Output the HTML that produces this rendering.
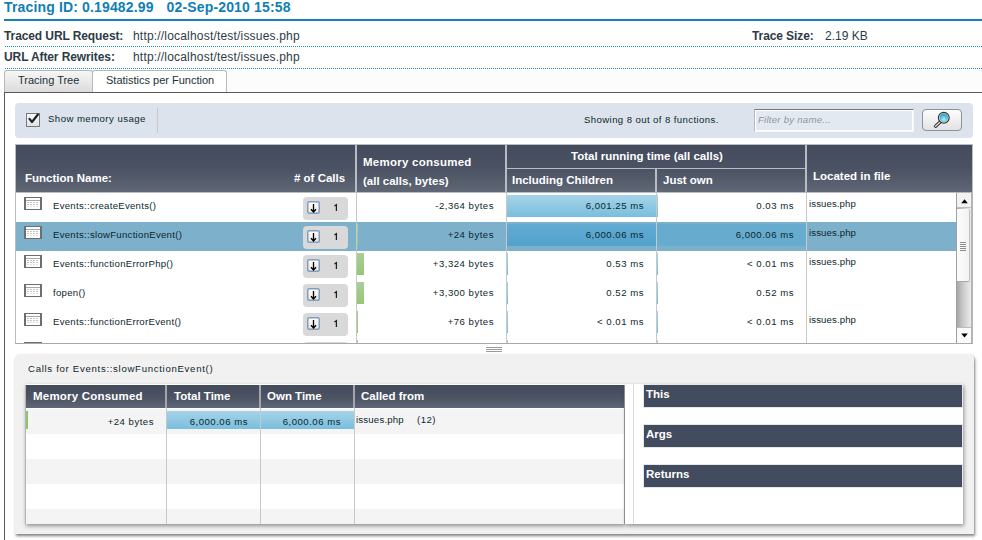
<!DOCTYPE html>
<html><head><meta charset="utf-8">
<style>
*{margin:0;padding:0;box-sizing:border-box}
html,body{width:982px;height:540px;overflow:hidden;background:#fff}
body{position:relative;font-family:"Liberation Sans",sans-serif;color:#1d3136}
.a{position:absolute;white-space:nowrap}
.b{font-weight:bold}
#title{left:4px;top:-1px;font-size:14px;line-height:16px;font-weight:bold;color:#117fb3;letter-spacing:0.15px}
#tline{left:4px;top:19px;width:978px;height:2px;background:#1483b7}
.lbl{font-size:12px;line-height:14px;font-weight:bold;color:#2e3b46;letter-spacing:-0.1px}
.val{font-size:12px;line-height:14px;color:#2e3b46;letter-spacing:0.19px}
.dot{left:5px;width:977px;height:1px;background-image:linear-gradient(to right,#1a8bbf 50%,transparent 50%);background-size:2px 1px}
/* tabs */
#tabbar{left:4px;top:70px;width:978px;height:23px;background:#fcfcfc;border-bottom:1px solid #5a5a5a}
.tab{top:70px;height:22px;border:1px solid #b8b8b8;border-bottom:none;border-radius:3px 3px 0 0;font-size:11px;line-height:18px;color:#1d3136}
#tab1{left:4px;width:89px;background:linear-gradient(#f6f6f6,#dcdcdc);padding-left:13px}
#tab2{left:92px;width:135px;background:#fff;padding-left:13px}
#panelL{left:4px;top:92px;width:1px;height:448px;background:#5a5a5a}
/* toolbar */
#tool{left:15px;top:103px;width:958px;height:35px;background:#dce3ed;border-radius:4px}
#chk{left:26px;top:113px;width:14px;height:14px;border:1px solid #75797d;background:linear-gradient(#fafafa,#e2e2e2)}
#sep{left:157px;top:108px;width:1px;height:25px;background:#c3c9d1}
#filter{left:754px;top:109px;width:160px;height:23px;border:1px solid #b6babe;border-top-color:#75787b;border-bottom-color:#f6f7f9;border-right-color:#f6f7f9;box-shadow:inset 1px 1px 0 #fff,inset -1px -1px 0 #fff;background:#e3e9f1;font-size:9.6px;line-height:20px;font-style:italic;color:#8e969d;padding-left:3px;letter-spacing:0.25px}
#sbtn{left:922px;top:109px;width:40px;height:22px;border:1px solid #8d9299;border-radius:4px;background:linear-gradient(#fdfdfd,#e2e2e2)}
/* main table header */
#thead{left:15px;top:144px;width:958px;height:49px;border:1px solid #b9bdc1;background:linear-gradient(#434b5c,#4a5263 50%,#606775)}
.th{font-size:11.5px;line-height:14px;font-weight:bold;color:#fff}
.vd{width:2px;background:#b9bdc3}
.hd{height:2px;background:#a3a7ad}
/* rows */
#tbody{left:15px;top:192px;width:958px;height:152px;border-left:1px solid #c4c4c4;border-bottom:1px solid #b4b4b4;background:#fff;overflow:hidden}
.row{position:absolute;left:0;width:941px;height:29px}
.sel{background:#7db0cb}
.ic{position:absolute;left:8px;top:4px;width:18px;height:13px;border:1px solid #7c7c7c;border-top-width:2px;background:#f4f4f4}
.fn{position:absolute;font-size:9.6px;line-height:12px;letter-spacing:0.28px;white-space:nowrap;color:#0d272d}
.badge{position:absolute;width:45px;height:23px;border-radius:4px;background:#d9d9d9}
.dbtn{position:absolute;left:4px;top:4px;width:13px;height:13px;border:1px solid #7f9cb8;border-radius:2px;background:linear-gradient(#fff,#dde3ea)}
.cnt{position:absolute;font-size:10.5px;line-height:12px;color:#0d272d}
.cd{position:absolute;top:0;width:1px;height:152px;background:#c9c9c9}
.num{position:absolute;font-size:9.6px;line-height:12px;text-align:right;white-space:nowrap;letter-spacing:0.5px;color:#0d272d}
.gbar{position:absolute;top:2px;height:22px;background:linear-gradient(#abcd9c,#95c871)}
.bbar{position:absolute;top:2px;height:22px;background:linear-gradient(#a6d4e9,#79bedd)}
.sbar{position:absolute;top:2px;height:22px;background:linear-gradient(#62abd3,#52a2cd)}
.sbar2{position:absolute;top:2px;height:22px;background:#67accf}
.file{position:absolute;left:793px;top:6px;font-size:10.3px;line-height:12px;letter-spacing:0.1px}
/* scrollbar */
#scroll{left:956px;top:193px;width:17px;height:151px;background:linear-gradient(to right,#d6d6d6,#f2f2f2 60%,#d8d8d8);border-left:1px solid #c0c0c0;border-right:1px solid #9a9a9a}
/* bottom panel */
#bpanel{left:15px;top:354px;width:959px;height:180px;background:#f1f1f1;border-radius:5px 5px 0 0;box-shadow:1px 2px 3px rgba(0,0,0,0.5)}
</style></head><body>
<div id="title" class="a">Tracing ID: 0.19482.99<span style="margin-left:13px">02-Sep-2010 15:58</span></div>
<div id="tline" class="a"></div>
<div class="a lbl" style="left:4px;top:29px">Traced URL Request:</div>
<div class="a val" style="left:133px;top:29px">http://localhost/test/issues.php</div>
<div class="a lbl" style="left:752px;top:29px">Trace Size:</div>
<div class="a val" style="left:825px;top:29px;letter-spacing:0">2.19 KB</div>
<div class="a dot" style="top:46px"></div>
<div class="a lbl" style="left:4px;top:50px">URL After Rewrites:</div>
<div class="a val" style="left:133px;top:50px">http://localhost/test/issues.php</div>
<div class="a dot" style="top:68px"></div>

<div id="tabbar" class="a"></div>
<div id="tab1" class="a tab">Tracing Tree</div>
<div id="tab2" class="a tab">Statistics per Function</div>
<div id="panelL" class="a"></div>

<div id="tool" class="a"></div>
<div id="chk" class="a"><svg style="position:absolute;left:-1px;top:-1px" width="14" height="14" viewBox="0 0 14 14"><path d="M3.5 5.9 L6 9 L11.9 1.5" fill="none" stroke="#1f2328" stroke-width="2.2" stroke-linejoin="round" stroke-linecap="round"/></svg></div>
<div class="a" style="left:48px;top:113px;font-size:9.6px;line-height:12px;letter-spacing:0.45px;color:#0d272d">Show memory usage</div>
<div id="sep" class="a"></div>
<div class="a" style="left:584px;top:114px;font-size:9.6px;line-height:12px;letter-spacing:0.4px;color:#0d272d">Showing 8 out of 8 functions.</div>
<div id="filter" class="a">Filter by name...</div>
<div id="sbtn" class="a"><svg style="position:absolute;left:-1px;top:-1px" width="40" height="22" viewBox="0 0 40 22"><defs><radialGradient id="mg" cx="0.5" cy="0.7" r="0.7"><stop offset="0" stop-color="#c4e8f4"/><stop offset="0.45" stop-color="#6cc6e6"/><stop offset="1" stop-color="#1f98cc"/></radialGradient></defs><path d="M13.6 17.2 L17.9 13.2" stroke="#2e2e2e" stroke-width="3.3" stroke-linecap="round"/><path d="M13.6 17.2 L17.9 13.2" stroke="#e6e6e6" stroke-width="1.3" stroke-linecap="round"/><circle cx="21.8" cy="8.8" r="5.4" fill="#d6dadc" stroke="#333" stroke-width="1.1"/><circle cx="21.8" cy="8.8" r="4.2" fill="url(#mg)"/></svg></div>

<div id="thead" class="a"></div>
<div class="a th" style="left:25px;top:171px">Function Name:</div>
<div class="a th" style="left:294px;top:171px"># of Calls</div>
<div class="a vd" style="left:355px;top:144px;height:48px"></div>
<div class="a th" style="left:363px;top:155px;letter-spacing:0.25px">Memory consumed</div>
<div class="a th" style="left:363px;top:174px">(all calls, bytes)</div>
<div class="a vd" style="left:505px;top:144px;height:48px"></div>
<div class="a th" style="left:571px;top:149px">Total running time (all calls)</div>
<div class="a" style="left:507px;top:168px;width:299px;height:1px;background:#b9bdc3"></div>
<div class="a th" style="left:512px;top:173px">Including Children</div>
<div class="a vd" style="left:655px;top:169px;height:23px"></div>
<div class="a th" style="left:663px;top:173px">Just own</div>
<div class="a vd" style="left:805px;top:144px;height:48px"></div>
<div class="a th" style="left:813px;top:169px">Located in file</div>

<div id="rows" class="a" style="left:0;top:0;width:982px;height:343px;overflow:hidden">
<div class="a" style="left:24px;top:197px;width:18px;height:13px"><svg style="display:block" width="18" height="13" viewBox="0 0 18 13"><rect x="0.75" y="0.5" width="16.5" height="12" fill="#fff" stroke="#6e6e6e" stroke-width="1"/><rect x="0" y="0" width="2" height="13" fill="#6e6e6e"/><rect x="16" y="0" width="2" height="13" fill="#6e6e6e"/><rect x="2" y="3" width="14" height="1" fill="#a8a8a8"/><g fill="#c4c4c4"><rect x="3" y="5" width="2" height="1"/><rect x="6" y="5" width="2" height="1"/><rect x="9" y="5" width="2" height="1"/><rect x="12" y="5" width="2" height="1"/><rect x="3" y="7" width="2" height="1"/><rect x="6" y="7" width="2" height="1"/><rect x="9" y="7" width="2" height="1"/><rect x="12" y="7" width="2" height="1"/><rect x="3" y="9" width="2" height="1" fill="#e0e0e0"/><rect x="6" y="9" width="2" height="1" fill="#e0e0e0"/><rect x="9" y="9" width="2" height="1" fill="#e0e0e0"/><rect x="12" y="9" width="2" height="1" fill="#e0e0e0"/></g></svg></div>
<div class="a fn" style="left:53px;top:200px">Events::createEvents()</div>
<div class="a badge" style="left:303px;top:197px"></div>
<div class="a" style="left:307px;top:201px;width:13px;height:13px"><svg style="display:block" width="13" height="13" viewBox="0 0 13 13"><defs><linearGradient id="dg" x1="0" y1="0" x2="0" y2="1"><stop offset="0" stop-color="#ffffff"/><stop offset="1" stop-color="#ece6dc"/></linearGradient></defs><rect x="0.75" y="0.75" width="11.5" height="11.5" rx="1.5" fill="url(#dg)" stroke="#7f9ec0" stroke-width="1.5"/><path d="M6.5 3v8M4 8.2l2.5 2.8 2.5-2.8" fill="none" stroke="#000" stroke-width="1.3"/></svg></div>
<svg class="a" style="left:333px;top:203px" width="6" height="9" viewBox="0 0 6 9"><path d="M1.4 3 L3.4 1.7 V8" fill="none" stroke="#0d272d" stroke-width="1.25"/></svg>
<div class="a num" style="right:488px;top:200px">-2,364 bytes</div>
<div class="a bbar" style="left:507px;top:195px;width:151px"></div>
<div class="a num" style="right:338px;top:200px">6,001.25 ms</div>
<div class="a num" style="right:188px;top:200px">0.03 ms</div>
<div class="a fn" style="left:809px;top:198px;letter-spacing:0.1px">issues.php</div>
<div class="a" style="left:16px;top:222px;width:940px;height:29px;background:#7db0cb"></div>
<div class="a" style="left:24px;top:226px;width:18px;height:13px"><svg style="display:block" width="18" height="13" viewBox="0 0 18 13"><rect x="0.75" y="0.5" width="16.5" height="12" fill="#fff" stroke="#6e6e6e" stroke-width="1"/><rect x="0" y="0" width="2" height="13" fill="#6e6e6e"/><rect x="16" y="0" width="2" height="13" fill="#6e6e6e"/><rect x="2" y="3" width="14" height="1" fill="#a8a8a8"/><g fill="#c4c4c4"><rect x="3" y="5" width="2" height="1"/><rect x="6" y="5" width="2" height="1"/><rect x="9" y="5" width="2" height="1"/><rect x="12" y="5" width="2" height="1"/><rect x="3" y="7" width="2" height="1"/><rect x="6" y="7" width="2" height="1"/><rect x="9" y="7" width="2" height="1"/><rect x="12" y="7" width="2" height="1"/><rect x="3" y="9" width="2" height="1" fill="#e0e0e0"/><rect x="6" y="9" width="2" height="1" fill="#e0e0e0"/><rect x="9" y="9" width="2" height="1" fill="#e0e0e0"/><rect x="12" y="9" width="2" height="1" fill="#e0e0e0"/></g></svg></div>
<div class="a fn" style="left:53px;top:229px">Events::slowFunctionEvent()</div>
<div class="a badge" style="left:303px;top:226px"></div>
<div class="a" style="left:307px;top:230px;width:13px;height:13px"><svg style="display:block" width="13" height="13" viewBox="0 0 13 13"><defs><linearGradient id="dg" x1="0" y1="0" x2="0" y2="1"><stop offset="0" stop-color="#ffffff"/><stop offset="1" stop-color="#ece6dc"/></linearGradient></defs><rect x="0.75" y="0.75" width="11.5" height="11.5" rx="1.5" fill="url(#dg)" stroke="#7f9ec0" stroke-width="1.5"/><path d="M6.5 3v8M4 8.2l2.5 2.8 2.5-2.8" fill="none" stroke="#000" stroke-width="1.3"/></svg></div>
<svg class="a" style="left:333px;top:232px" width="6" height="9" viewBox="0 0 6 9"><path d="M1.4 3 L3.4 1.7 V8" fill="none" stroke="#0d272d" stroke-width="1.25"/></svg>
<div class="a gbar" style="left:357px;top:224px;width:1px"></div>
<div class="a num" style="right:488px;top:229px">+24 bytes</div>
<div class="a sbar" style="left:507px;top:224px;width:151px"></div>
<div class="a num" style="right:338px;top:229px">6,000.06 ms</div>
<div class="a sbar2" style="left:657px;top:224px;width:149px"></div>
<div class="a num" style="right:188px;top:229px">6,000.06 ms</div>
<div class="a fn" style="left:809px;top:227px;letter-spacing:0.12px">issues.php</div>
<div class="a" style="left:24px;top:255px;width:18px;height:13px"><svg style="display:block" width="18" height="13" viewBox="0 0 18 13"><rect x="0.75" y="0.5" width="16.5" height="12" fill="#fff" stroke="#6e6e6e" stroke-width="1"/><rect x="0" y="0" width="2" height="13" fill="#6e6e6e"/><rect x="16" y="0" width="2" height="13" fill="#6e6e6e"/><rect x="2" y="3" width="14" height="1" fill="#a8a8a8"/><g fill="#c4c4c4"><rect x="3" y="5" width="2" height="1"/><rect x="6" y="5" width="2" height="1"/><rect x="9" y="5" width="2" height="1"/><rect x="12" y="5" width="2" height="1"/><rect x="3" y="7" width="2" height="1"/><rect x="6" y="7" width="2" height="1"/><rect x="9" y="7" width="2" height="1"/><rect x="12" y="7" width="2" height="1"/><rect x="3" y="9" width="2" height="1" fill="#e0e0e0"/><rect x="6" y="9" width="2" height="1" fill="#e0e0e0"/><rect x="9" y="9" width="2" height="1" fill="#e0e0e0"/><rect x="12" y="9" width="2" height="1" fill="#e0e0e0"/></g></svg></div>
<div class="a fn" style="left:53px;top:258px">Events::functionErrorPhp()</div>
<div class="a badge" style="left:303px;top:255px"></div>
<div class="a" style="left:307px;top:259px;width:13px;height:13px"><svg style="display:block" width="13" height="13" viewBox="0 0 13 13"><defs><linearGradient id="dg" x1="0" y1="0" x2="0" y2="1"><stop offset="0" stop-color="#ffffff"/><stop offset="1" stop-color="#ece6dc"/></linearGradient></defs><rect x="0.75" y="0.75" width="11.5" height="11.5" rx="1.5" fill="url(#dg)" stroke="#7f9ec0" stroke-width="1.5"/><path d="M6.5 3v8M4 8.2l2.5 2.8 2.5-2.8" fill="none" stroke="#000" stroke-width="1.3"/></svg></div>
<svg class="a" style="left:333px;top:261px" width="6" height="9" viewBox="0 0 6 9"><path d="M1.4 3 L3.4 1.7 V8" fill="none" stroke="#0d272d" stroke-width="1.25"/></svg>
<div class="a gbar" style="left:357px;top:253px;width:7px"></div>
<div class="a num" style="right:488px;top:258px">+3,324 bytes</div>
<div class="a bbar" style="left:507px;top:253px;width:1px"></div>
<div class="a num" style="right:338px;top:258px">0.53 ms</div>
<div class="a bbar" style="left:657px;top:253px;width:1px"></div>
<div class="a num" style="right:188px;top:258px">&lt; 0.01 ms</div>
<div class="a fn" style="left:809px;top:256px;letter-spacing:0.12px">issues.php</div>
<div class="a" style="left:24px;top:284px;width:18px;height:13px"><svg style="display:block" width="18" height="13" viewBox="0 0 18 13"><rect x="0.75" y="0.5" width="16.5" height="12" fill="#fff" stroke="#6e6e6e" stroke-width="1"/><rect x="0" y="0" width="2" height="13" fill="#6e6e6e"/><rect x="16" y="0" width="2" height="13" fill="#6e6e6e"/><rect x="2" y="3" width="14" height="1" fill="#a8a8a8"/><g fill="#c4c4c4"><rect x="3" y="5" width="2" height="1"/><rect x="6" y="5" width="2" height="1"/><rect x="9" y="5" width="2" height="1"/><rect x="12" y="5" width="2" height="1"/><rect x="3" y="7" width="2" height="1"/><rect x="6" y="7" width="2" height="1"/><rect x="9" y="7" width="2" height="1"/><rect x="12" y="7" width="2" height="1"/><rect x="3" y="9" width="2" height="1" fill="#e0e0e0"/><rect x="6" y="9" width="2" height="1" fill="#e0e0e0"/><rect x="9" y="9" width="2" height="1" fill="#e0e0e0"/><rect x="12" y="9" width="2" height="1" fill="#e0e0e0"/></g></svg></div>
<div class="a fn" style="left:53px;top:287px">fopen()</div>
<div class="a badge" style="left:303px;top:284px"></div>
<div class="a" style="left:307px;top:288px;width:13px;height:13px"><svg style="display:block" width="13" height="13" viewBox="0 0 13 13"><defs><linearGradient id="dg" x1="0" y1="0" x2="0" y2="1"><stop offset="0" stop-color="#ffffff"/><stop offset="1" stop-color="#ece6dc"/></linearGradient></defs><rect x="0.75" y="0.75" width="11.5" height="11.5" rx="1.5" fill="url(#dg)" stroke="#7f9ec0" stroke-width="1.5"/><path d="M6.5 3v8M4 8.2l2.5 2.8 2.5-2.8" fill="none" stroke="#000" stroke-width="1.3"/></svg></div>
<svg class="a" style="left:333px;top:290px" width="6" height="9" viewBox="0 0 6 9"><path d="M1.4 3 L3.4 1.7 V8" fill="none" stroke="#0d272d" stroke-width="1.25"/></svg>
<div class="a gbar" style="left:357px;top:282px;width:7px"></div>
<div class="a num" style="right:488px;top:287px">+3,300 bytes</div>
<div class="a bbar" style="left:507px;top:282px;width:1px"></div>
<div class="a num" style="right:338px;top:287px">0.52 ms</div>
<div class="a bbar" style="left:657px;top:282px;width:1px"></div>
<div class="a num" style="right:188px;top:287px">0.52 ms</div>
<div class="a" style="left:24px;top:313px;width:18px;height:13px"><svg style="display:block" width="18" height="13" viewBox="0 0 18 13"><rect x="0.75" y="0.5" width="16.5" height="12" fill="#fff" stroke="#6e6e6e" stroke-width="1"/><rect x="0" y="0" width="2" height="13" fill="#6e6e6e"/><rect x="16" y="0" width="2" height="13" fill="#6e6e6e"/><rect x="2" y="3" width="14" height="1" fill="#a8a8a8"/><g fill="#c4c4c4"><rect x="3" y="5" width="2" height="1"/><rect x="6" y="5" width="2" height="1"/><rect x="9" y="5" width="2" height="1"/><rect x="12" y="5" width="2" height="1"/><rect x="3" y="7" width="2" height="1"/><rect x="6" y="7" width="2" height="1"/><rect x="9" y="7" width="2" height="1"/><rect x="12" y="7" width="2" height="1"/><rect x="3" y="9" width="2" height="1" fill="#e0e0e0"/><rect x="6" y="9" width="2" height="1" fill="#e0e0e0"/><rect x="9" y="9" width="2" height="1" fill="#e0e0e0"/><rect x="12" y="9" width="2" height="1" fill="#e0e0e0"/></g></svg></div>
<div class="a fn" style="left:53px;top:316px">Events::functionErrorEvent()</div>
<div class="a badge" style="left:303px;top:313px"></div>
<div class="a" style="left:307px;top:317px;width:13px;height:13px"><svg style="display:block" width="13" height="13" viewBox="0 0 13 13"><defs><linearGradient id="dg" x1="0" y1="0" x2="0" y2="1"><stop offset="0" stop-color="#ffffff"/><stop offset="1" stop-color="#ece6dc"/></linearGradient></defs><rect x="0.75" y="0.75" width="11.5" height="11.5" rx="1.5" fill="url(#dg)" stroke="#7f9ec0" stroke-width="1.5"/><path d="M6.5 3v8M4 8.2l2.5 2.8 2.5-2.8" fill="none" stroke="#000" stroke-width="1.3"/></svg></div>
<svg class="a" style="left:333px;top:319px" width="6" height="9" viewBox="0 0 6 9"><path d="M1.4 3 L3.4 1.7 V8" fill="none" stroke="#0d272d" stroke-width="1.25"/></svg>
<div class="a gbar" style="left:357px;top:311px;width:1px"></div>
<div class="a num" style="right:488px;top:316px">+76 bytes</div>
<div class="a bbar" style="left:507px;top:311px;width:1px"></div>
<div class="a num" style="right:338px;top:316px">&lt; 0.01 ms</div>
<div class="a bbar" style="left:657px;top:311px;width:1px"></div>
<div class="a num" style="right:188px;top:316px">&lt; 0.01 ms</div>
<div class="a fn" style="left:809px;top:314px;letter-spacing:0.12px">issues.php</div>
<div class="a" style="left:24px;top:342px;width:18px;height:13px"><svg style="display:block" width="18" height="13" viewBox="0 0 18 13"><rect x="0.75" y="0.5" width="16.5" height="12" fill="#fff" stroke="#6e6e6e" stroke-width="1"/><rect x="0" y="0" width="2" height="13" fill="#6e6e6e"/><rect x="16" y="0" width="2" height="13" fill="#6e6e6e"/><rect x="2" y="3" width="14" height="1" fill="#a8a8a8"/><g fill="#c4c4c4"><rect x="3" y="5" width="2" height="1"/><rect x="6" y="5" width="2" height="1"/><rect x="9" y="5" width="2" height="1"/><rect x="12" y="5" width="2" height="1"/><rect x="3" y="7" width="2" height="1"/><rect x="6" y="7" width="2" height="1"/><rect x="9" y="7" width="2" height="1"/><rect x="12" y="7" width="2" height="1"/><rect x="3" y="9" width="2" height="1" fill="#e0e0e0"/><rect x="6" y="9" width="2" height="1" fill="#e0e0e0"/><rect x="9" y="9" width="2" height="1" fill="#e0e0e0"/><rect x="12" y="9" width="2" height="1" fill="#e0e0e0"/></g></svg></div>
<div class="a badge" style="left:303px;top:342px"></div>
<div class="a" style="left:307px;top:346px;width:13px;height:13px"><svg style="display:block" width="13" height="13" viewBox="0 0 13 13"><defs><linearGradient id="dg" x1="0" y1="0" x2="0" y2="1"><stop offset="0" stop-color="#ffffff"/><stop offset="1" stop-color="#ece6dc"/></linearGradient></defs><rect x="0.75" y="0.75" width="11.5" height="11.5" rx="1.5" fill="url(#dg)" stroke="#7f9ec0" stroke-width="1.5"/><path d="M6.5 3v8M4 8.2l2.5 2.8 2.5-2.8" fill="none" stroke="#000" stroke-width="1.3"/></svg></div>
<svg class="a" style="left:333px;top:348px" width="6" height="9" viewBox="0 0 6 9"><path d="M1.4 3 L3.4 1.7 V8" fill="none" stroke="#0d272d" stroke-width="1.25"/></svg>
<div class="a gbar" style="left:357px;top:340px;width:1px"></div>
<div class="a bbar" style="left:507px;top:340px;width:1px"></div>
<div class="a bbar" style="left:657px;top:340px;width:1px"></div>
<div class="a" style="left:356px;top:193px;width:1px;height:150px;background:#c8c8c8"></div>
<div class="a" style="left:506px;top:193px;width:1px;height:150px;background:#c8c8c8"></div>
<div class="a" style="left:656px;top:193px;width:1px;height:150px;background:#c8c8c8"></div>
<div class="a" style="left:806px;top:193px;width:1px;height:150px;background:#c8c8c8"></div>
</div>
<div class="a" style="left:956px;top:192px;width:17px;height:151px;background:#b2b6ba"></div>
<div class="a" style="left:956px;top:193px;width:1px;height:150px;background:#a0a0a0"></div>
<div class="a" style="left:957px;top:193px;width:14px;height:150px;background:linear-gradient(to right,#a6a6a6,#c8c8c8 40%,#ececec)"></div>
<div class="a" style="left:957px;top:193px;width:14px;height:15px;background:#f2f2f2;border-bottom:1px solid #bdbdbd"></div>
<svg class="a" style="left:961px;top:199px" width="7" height="5" viewBox="0 0 7 5"><path d="M3.5 0.3 L6.8 4.2 L0.2 4.2Z" fill="#000"/></svg>
<div class="a" style="left:957px;top:209px;width:13px;height:73px;background:linear-gradient(to right,#fbfbfb,#f2f2f2);border-right:1px solid #c2c2c2;border-bottom:1px solid #a8a8a8;border-radius:0 2px 2px 0"></div>
<div class="a" style="left:960px;top:242px;width:6px;height:9px;background:repeating-linear-gradient(#8d8d8d 0 1px,transparent 1px 2px)"></div>
<div class="a" style="left:957px;top:327px;width:14px;height:16px;background:#fafafa;border-top:1px solid #bdbdbd"></div>
<svg class="a" style="left:961px;top:333px" width="7" height="5" viewBox="0 0 7 5"><path d="M0.2 0.6 L6.8 0.6 L3.5 4.6Z" fill="#000"/></svg>
<div class="a" style="left:15px;top:343px;width:958px;height:1px;background:#a9a9a9"></div>
<div class="a" style="left:15px;top:192px;width:1px;height:151px;background:#b9bdc1"></div>
<svg class="a" style="left:486px;top:346px" width="16" height="7" viewBox="0 0 16 7"><g fill="#9a9a9a"><rect x="0" y="1" width="16" height="1"/><rect x="0" y="3" width="16" height="1"/><rect x="0" y="5" width="16" height="1"/></g></svg>

<div id="bpanel" class="a"></div>
<div class="a" style="left:28px;top:363px;font-size:9.6px;line-height:12px;letter-spacing:0.7px;color:#0d272d">Calls for Events::slowFunctionEvent()</div>
<div class="a" style="left:26px;top:384px;width:599px;height:140px;background:#fff;box-shadow:0 2px 4px rgba(0,0,0,0.4)"></div>
<div class="a" style="left:25px;top:385px;width:1px;height:139px;background:#b4b4b4"></div>
<div class="a" style="left:624px;top:385px;width:1px;height:139px;background:#9b9b9b"></div>
<div class="a" style="left:26px;top:385px;width:598px;height:23px;background:linear-gradient(#434b5c,#4c5464 55%,#5f6675)"></div>
<div class="a" style="left:26px;top:409px;width:598px;height:25px;background:#f4f4f4"></div>
<div class="a" style="left:26px;top:459px;width:598px;height:25px;background:#f4f4f4"></div>
<div class="a" style="left:26px;top:509px;width:598px;height:15px;background:#f4f4f4"></div>
<div class="a" style="left:165px;top:385px;width:2px;height:23px;background:#a3a7ad"></div>
<div class="a" style="left:259px;top:385px;width:2px;height:23px;background:#a3a7ad"></div>
<div class="a" style="left:353px;top:385px;width:2px;height:23px;background:#a3a7ad"></div>
<div class="a" style="left:166px;top:408px;width:1px;height:116px;background:#c8c8c8"></div>
<div class="a" style="left:260px;top:408px;width:1px;height:116px;background:#c8c8c8"></div>
<div class="a" style="left:354px;top:408px;width:1px;height:116px;background:#c8c8c8"></div>
<div class="a th" style="left:33px;top:389px;letter-spacing:0.2px">Memory Consumed</div>
<div class="a th" style="left:174px;top:389px;">Total Time</div>
<div class="a th" style="left:267px;top:389px;">Own Time</div>
<div class="a th" style="left:361px;top:389px;">Called from</div>
<div class="a" style="left:26px;top:411px;width:2px;height:18px;background:#8fc46c"></div>
<div class="a num" style="right:828px;top:416px">+24 bytes</div>
<div class="a bbar" style="left:167px;top:411px;width:93px;height:18px"></div>
<div class="a num" style="right:734px;top:416px">6,000.06 ms</div>
<div class="a bbar" style="left:261px;top:411px;width:93px;height:18px"></div>
<div class="a num" style="right:641px;top:416px">6,000.06 ms</div>
<div class="a fn" style="left:356px;top:414px;letter-spacing:0.2px">issues.php</div>
<div class="a fn" style="left:417px;top:414px;letter-spacing:0.5px">(12)</div>
<div class="a" style="left:625px;top:384px;width:338px;height:140px;background:#fff;box-shadow:1px 2px 4px rgba(0,0,0,0.4)"></div>
<div class="a" style="left:633px;top:384px;width:1px;height:140px;background:#d6dcdc"></div>
<div class="a" style="left:643px;top:384px;width:320px;height:24px;background:#434b5e;border:1px solid #e8e8e8"></div>
<div class="a" style="left:643px;top:424px;width:320px;height:24px;background:#434b5e;border:1px solid #e8e8e8"></div>
<div class="a" style="left:643px;top:464px;width:320px;height:24px;background:#434b5e;border:1px solid #e8e8e8"></div>
<div class="a th" style="left:646px;top:387px;">This</div>
<div class="a th" style="left:646px;top:427px;">Args</div>
<div class="a th" style="left:646px;top:467px;">Returns</div>
</body></html>
